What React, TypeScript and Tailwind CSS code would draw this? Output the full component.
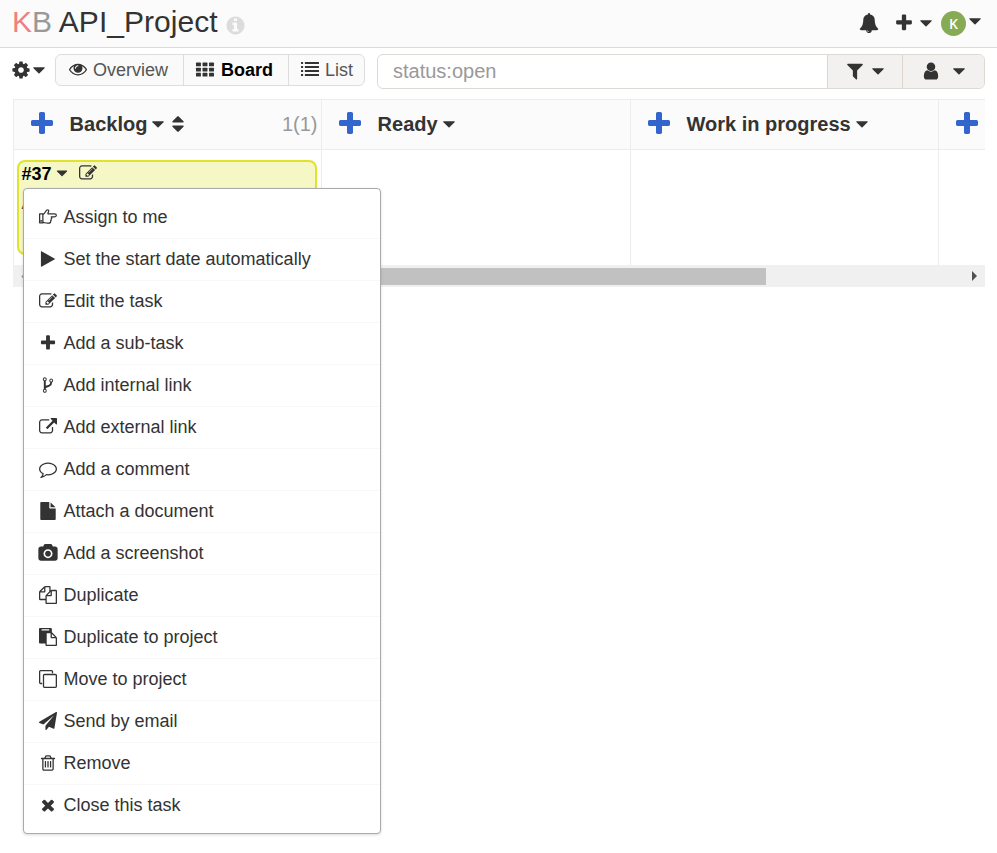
import type { ReactNode } from "react";

const GLYPHS: Record<string, string> = {
  bell: "M912 1696q0-16-16-16-59 0-101.5-42.5t-42.5-101.5q0-16-16-16t-16 16q0 73 51.5 124.5t124.5 51.5q16 0 16-16zm816-288q0 52-38 90t-90 38h-448q0 106-75 181t-181 75-181-75-75-181h-448q-52 0-90-38t-38-90q50-42 91-88t85-119.5 74.5-158.5 50-206 19.5-260q0-152 117-282.5t307-158.5q-8-19-8-39 0-40 28-68t68-28 68 28 28 68q0 20-8 39 190 28 307 158.5t117 282.5q0 139 19.5 260t50 206 74.5 158.5 85 119.5 91 88z",
  plus: "M1600 736v192q0 40-28 68t-68 28h-416v416q0 40-28 68t-68 28h-192q-40 0-68-28t-28-68v-416h-416q-40 0-68-28t-28-68v-192q0-40 28-68t68-28h416v-416q0-40 28-68t68-28h192q40 0 68 28t28 68v416h416q40 0 68 28t28 68z",
  caret: "M1408 704q0 26-19 45l-448 448q-19 19-45 19t-45-19l-448-448q-19-19-19-45t19-45 45-19h896q26 0 45 19t19 45z",
  sort: "M1408 1088q0 26-19 45l-448 448q-19 19-45 19t-45-19l-448-448q-19-19-19-45t19-45 45-19h896q26 0 45 19t19 45zm0-384q0 26-19 45t-45 19h-896q-26 0-45-19t-19-45 19-45l448-448q19-19 45-19t45 19l448 448q19 19 19 45z",
  info: "M1152 1376v-160q0-14-9-23t-23-9h-96v-512q0-14-9-23t-23-9h-320q-14 0-23 9t-9 23v160q0 14 9 23t23 9h96v320h-96q-14 0-23 9t-9 23v160q0 14 9 23t23 9h448q14 0 23-9t9-23zm-128-896v-160q0-14-9-23t-23-9h-192q-14 0-23 9t-9 23v160q0 14 9 23t23 9h192q14 0 23-9t9-23zm640 416q0 209-103 385.5t-279.5 279.5-385.5 103-385.5-103-279.5-279.5-103-385.5 103-385.5 279.5-279.5 385.5-103 385.5 103 279.5 279.5 103 385.5z",
  cog: "M1152 896q0-106-75-181t-181-75-181 75-75 181 75 181 181 75 181-75 75-181zm512-109v222q0 12-8 23t-20 13l-185 28q-19 54-39 91 35 50 107 138 10 12 10 25t-9 23q-27 37-99 108t-94 71q-12 0-26-9l-138-108q-44 23-91 38-16 136-29 186-7 28-36 28h-222q-14 0-24.5-8.5t-11.5-21.5l-28-184q-49-16-90-37l-141 107q-10 9-25 9-14 0-25-11-126-114-165-168-7-10-7-23 0-12 8-23 15-21 51-66.5t54-70.5q-27-50-41-99l-183-27q-13-2-21-12.5t-8-23.5v-222q0-12 8-23t19-13l186-28q14-46 39-92-40-57-107-138-10-12-10-24 0-10 9-23 26-36 98.5-107.5t94.5-71.5q13 0 26 10l138 107q44-23 91-38 16-136 29-186 7-28 36-28h222q14 0 24.5 8.5t11.5 21.5l28 184q49 16 90 37l142-107q9-9 24-9 13 0 25 10 129 119 165 170 7 8 7 22 0 12-8 23-15 21-51 66.5t-54 70.5q26 50 41 98l183 28q13 2 21 12.5t8 23.5z",
  eye: "M1664 960q-152-236-381-353 61 104 61 225 0 185-131.5 316.5t-316.5 131.5-316.5-131.5-131.5-316.5q0-121 61-225-229 117-381 353 133 205 333.5 326.5t434.5 121.5 434.5-121.5 333.5-326.5zm-720-384q0-20-14-34t-34-14q-125 0-214.5 89.5t-89.5 214.5q0 20 14 34t34 14 34-14 14-34q0-86 61-147t147-61q20 0 34-14t14-34zm848 384q0 34-20 69-140 230-376.5 368.5t-499.5 138.5-499.5-139-376.5-368q-20-35-20-69t20-69q140-229 376.5-368t499.5-139 499.5 139 376.5 368q20 35 20 69z",
  filter: "M1595 295q17 41-14 70l-493 493v742q0 42-39 59-13 5-25 5-27 0-45-19l-256-256q-19-19-19-45v-486l-493-493q-31-29-14-70 17-39 59-39h1280q42 0 59 39z",
  user: "M1536 1399q0 109-62.5 187t-150.5 78h-854q-88 0-150.5-78t-62.5-187q0-85 8.5-160.5t31.5-152 58.5-131 94-89 134.5-34.5q131 128 313 128t313-128q76 0 134.5 34.5t94 89 58.5 131 31.5 152 8.5 160.5zm-256-887q0 159-112.5 271.5t-271.5 112.5-271.5-112.5-112.5-271.5 112.5-271.5 271.5-112.5 271.5 112.5 112.5 271.5z",
  edit: "M888 1184l116-116-152-152-116 116v56h96v96h56zm440-720q-16-16-33 1l-350 350q-17 17-1 33t33-1l350-350q17-17 1-33zm80 594v190q0 119-84.5 203.5t-203.5 84.5h-832q-119 0-203.5-84.5t-84.5-203.5v-832q0-119 84.5-203.5t203.5-84.5h832q63 0 117 25 15 7 18 23 3 17-9 29l-49 49q-14 14-32 8-23-6-45-6h-832q-66 0-113 47t-47 113v832q0 66 47 113t113 47h832q66 0 113-47t47-113v-126q0-13 9-22l64-64q15-15 35-7t20 29zm-96-738l288 288-672 672h-288v-288zm444 132l-92 92-288-288 92-92q28-28 68-28t68 28l152 152q28 28 28 68t-28 68z",
  play: "M1576 927l-1328 738q-23 13-39.5 3t-16.5-36v-1472q0-26 16.5-36t39.5 3l1328 738q23 13 23 31t-23 31z",
  fork: "M672 1472q0-40-28-68t-68-28-68 28-28 68 28 68 68 28 68-28 28-68zm0-1152q0-40-28-68t-68-28-68 28-28 68 28 68 68 28 68-28 28-68zm640 128q0-40-28-68t-68-28-68 28-28 68 28 68 68 28 68-28 28-68zm96 0q0 52-26 96.5t-70 69.5q-2 287-226 414-67 38-203 81-128 40-169.5 71t-41.5 100v26q44 25 70 69.5t26 96.5q0 80-56 136t-136 56-136-56-56-136q0-52 26-96.5t70-69.5v-820q-44-25-70-69.5t-26-96.5q0-80 56-136t136-56 136 56 56 136q0 52-26 96.5t-70 69.5v497q54-26 154-57 55-17 87.5-29.5t70.5-31 59-39.5 40.5-51 28-69.5 8.5-91.5q-44-25-70-69.5t-26-96.5q0-80 56-136t136-56 136 56 56 136z",
  external: "M1408 928v320q0 119-84.5 203.5t-203.5 84.5h-832q-119 0-203.5-84.5t-84.5-203.5v-832q0-119 84.5-203.5t203.5-84.5h704q14 0 23 9t9 23v64q0 14-9 23t-23 9h-704q-66 0-113 47t-47 113v832q0 66 47 113t113 47h832q66 0 113-47t47-113v-320q0-14 9-23t23-9h64q14 0 23 9t9 23zm384-864v512q0 26-19 45t-45 19-45-19l-176-176-652 652q-10 10-23 10t-23-10l-114-114q-10-10-10-23t10-23l652-652-176-176q-19-19-19-45t19-45 45-19h512q26 0 45 19t19 45z",
  comment: "M896 384q-204 0-381.5 69.5t-282 187.5-104.5 255q0 112 71.5 213.5t201.5 175.5l87 50-27 96q-24 91-70 172 152-63 275-171l43-38 57 6q69 8 130 8 204 0 381.5-69.5t282-187.5 104.5-255-104.5-255-282-187.5-381.5-69.5zm896 512q0 174-120 321.5t-326 233-450 85.5q-70 0-145-8-198 175-460 242-49 14-114 22h-5q-15 0-27-10.5t-16-27.5v-1q-3-4-.5-12t2-10 4.5-9.5l6-9 7-8.5 8-9q7-8 31-34.5t34.5-38 31-39.5 32.5-51 27-59 26-76q-157-89-247.5-220t-90.5-281q0-174 120-321.5t326-233 450-85.5 450 85.5 326 233 120 321.5z",
  file: "M1152 512v-472q22 14 36 28l408 408q14 14 28 36h-472zm-128 32q0 40 28 68t68 28h544v1056q0 40-28 68t-68 28h-1344q-40 0-68-28t-28-68v-1600q0-40 28-68t68-28h800v544z",
  camera: "M896 672q119 0 203.5 84.5t84.5 203.5-84.5 203.5-203.5 84.5-203.5-84.5-84.5-203.5 84.5-203.5 203.5-84.5zm704-416q106 0 181 75t75 181v896q0 106-75 181t-181 75h-1408q-106 0-181-75t-75-181v-896q0-106 75-181t181-75h224l51-136q19-49 69.5-84.5t103.5-35.5h512q53 0 103.5 35.5t69.5 84.5l51 136h224zm-704 1152q185 0 316.5-131.5t131.5-316.5-131.5-316.5-316.5-131.5-316.5 131.5-131.5 316.5 131.5 316.5 316.5 131.5z",
  files: "M1696 384q40 0 68 28t28 68v1216q0 40-28 68t-68 28h-960q-40 0-68-28t-28-68v-288h-544q-40 0-68-28t-28-68v-672q0-40 20-88t48-76l408-408q28-28 76-48t88-20h416q40 0 68 28t28 68v328q68-40 128-40h416zm-544 213l-299 299h299v-299zm-640-384l-299 299h299v-299zm196 647l316-316v-416h-384v416q0 40-28 68t-68 28h-416v640h512v-256q0-40 20-88t48-76zm956 804v-1152h-384v416q0 40-28 68t-68 28h-416v640h896z",
  clipboard: "M768 1664h896v-640h-416q-40 0-68-28t-28-68v-416h-384v1152zm256-1440v-64q0-13-9.5-22.5t-22.5-9.5h-704q-13 0-22.5 9.5t-9.5 22.5v64q0 13 9.5 22.5t22.5 9.5h704q13 0 22.5-9.5t9.5-22.5zm256 672h299l-299-299v299zm512 128v672q0 40-28 68t-68 28h-960q-40 0-68-28t-28-68v-160h-544q-40 0-68-28t-28-68v-1344q0-40 28-68t68-28h1088q40 0 68 28t28 68v328q21 13 36 28l408 408q28 28 48 76t20 88z",
  clone: "M1664 1632v-1088q0-13-9.5-22.5t-22.5-9.5h-1088q-13 0-22.5 9.5t-9.5 22.5v1088q0 13 9.5 22.5t22.5 9.5h1088q13 0 22.5-9.5t9.5-22.5zm128-1088v1088q0 66-47 113t-113 47h-1088q-66 0-113-47t-47-113v-1088q0-66 47-113t113-47h1088q66 0 113 47t47 113zm-384-384v160h-128v-160q0-13-9.5-22.5t-22.5-9.5h-1088q-13 0-22.5 9.5t-9.5 22.5v1088q0 13 9.5 22.5t22.5 9.5h160v128h-160q-66 0-113-47t-47-113v-1088q0-66 47-113t113-47h1088q66 0 113 47t47 113z",
  plane: "M1764 11q33 24 27 64l-256 1536q-5 29-32 45-14 8-31 8-11 0-24-5l-453-185-242 295q-18 23-49 23-13 0-22-4-19-7-30.5-23.5t-11.5-36.5v-349l864-1059-1069 925-395-162q-37-14-40-55-2-40 32-59l1664-960q15-9 32-9 20 0 36 11z",
  trash: "M704 736v576q0 14-9 23t-23 9h-64q-14 0-23-9t-9-23v-576q0-14 9-23t23-9h64q14 0 23 9t9 23zm256 0v576q0 14-9 23t-23 9h-64q-14 0-23-9t-9-23v-576q0-14 9-23t23-9h64q14 0 23 9t9 23zm256 0v576q0 14-9 23t-23 9h-64q-14 0-23-9t-9-23v-576q0-14 9-23t23-9h64q14 0 23 9t9 23zm128 724v-948h-896v948q0 22 7 40.5t14.5 27 10.5 8.5h832q3 0 10.5-8.5t14.5-27 7-40.5zm-672-1076h448l-48-117q-7-9-17-11h-317q-10 2-17 11zm928 32v64q0 14-9 23t-23 9h-96v948q0 83-47 143.5t-113 60.5h-832q-66 0-113-58.5t-47-141.5v-952h-96q-14 0-23-9t-9-23v-64q0-14 9-23t23-9h309l70-167q15-37 54-63t79-26h320q40 0 79 26t54 63l70 167h309q14 0 23 9t9 23z",
  times: "M1490 1322q0 40-28 68l-136 136q-28 28-68 28t-68-28l-294-294-294 294q-28 28-68 28t-68-28l-136-136q-28-28-28-68t28-68l294-294-294-294q-28-28-28-68t28-68l136-136q28-28 68-28t68 28l294 294 294-294q28-28 68-28t68 28l136 136q28 28 28 68t-28 68l-294 294 294 294q28 28 28 68z",
};

function Svg({ className = "", children }: { className?: string; children: ReactNode }) {
  return (
    <svg viewBox="0 0 1792 1792" fill="currentColor" className={`shrink-0 overflow-visible ${className}`}>
      {children}
    </svg>
  );
}

function Icon({ name, className = "size-[18px]" }: { name: string; className?: string }) {
  if (name === "hand") {
    return (
      <Svg className={className}>
        <g fill="none" stroke="currentColor" strokeWidth="125" strokeLinejoin="round">
          <path d="M64 580h320v900H64z" />
          <path d="M384 640c110-20 230-190 310-340 60-110 90-130 150-120 110 10 150 90 110 180-30 80-70 110-70 220h660c110 0 184 70 184 150s-74 150-184 150h-320c60 80 50 170-20 230 30 60 20 130-40 170 20 130-60 230-180 230H850c-180 0-300-60-466-80" />
        </g>
        <circle cx="210" cy="1290" r="90" />
      </Svg>
    );
  }
  if (name === "grid") {
    return (
      <Svg className={className}>
        {[256, 768, 1280].map((y) =>
          [0, 650, 1300].map((x) => <rect key={`${x}-${y}`} x={x} y={y} width="490" height="375" rx="60" />)
        )}
      </Svg>
    );
  }
  if (name === "list") {
    return (
      <Svg className={className}>
        {[200, 600, 1000, 1400].map((y) => (
          <g key={y}>
            <rect x="0" y={y} width="210" height="190" rx="30" />
            <rect x="384" y={y} width="1408" height="190" rx="30" />
          </g>
        ))}
      </Svg>
    );
  }
  return (
    <Svg className={className}>
      <path d={GLYPHS[name]} />
    </Svg>
  );
}

const MENU = [
  ["hand", "Assign to me"],
  ["play", "Set the start date automatically"],
  ["edit", "Edit the task"],
  ["plus", "Add a sub-task"],
  ["fork", "Add internal link"],
  ["external", "Add external link"],
  ["comment", "Add a comment"],
  ["file", "Attach a document"],
  ["camera", "Add a screenshot"],
  ["files", "Duplicate"],
  ["clipboard", "Duplicate to project"],
  ["clone", "Move to project"],
  ["plane", "Send by email"],
  ["trash", "Remove"],
  ["times", "Close this task"],
];

function Header() {
  return (
    <header className="flex h-12 items-start border-b border-[#dbdbdb] bg-[#fbfbfb] pl-3">
      <h1 className="flex items-start text-[30px] leading-[34px] whitespace-pre text-[#333]">
        <span className="pt-[5px]">
          <span className="text-[#f08080]">K</span>
          <span className="text-[#999]">B</span>
          <span className="tracking-[0.05px]"> API_Project</span>
        </span>
        <Icon name="info" className="mt-[15px] ml-[7px] size-[21px] text-[#dcdcdc]" />
      </h1>
      <div className="ml-auto flex">
        <Icon name="bell" className="mt-[13px] size-5" />
        <Icon name="plus" className="mt-[13px] ml-[15px] size-5" />
        <Icon name="caret" className="mt-[13px] ml-[2px] size-5" />
        <div className="mt-[11px] ml-[5px] flex size-[25px] items-center justify-center rounded-full bg-[#87ab54] font-['Open_Sans',sans-serif] text-[14px] font-semibold text-white">
          K
        </div>
        <Icon name="caret" className="mt-[11px] mr-[12px] -ml-px size-5" />
      </div>
    </header>
  );
}

function Toolbar() {
  return (
    <div className="flex h-[51px] items-start pt-1.5 pl-[11px]">
      <Icon name="cog" className="mt-1.5 size-5" />
      <Icon name="caret" className="mt-1.5 -ml-0.5 size-5" />
      <nav className="ml-[6px] flex h-8 w-[310px] overflow-hidden rounded-md border border-[#ddd] bg-[#fafafa] text-lg leading-[30px] text-[#555]">
        <div className="flex w-[128px] items-center border-r border-[#ddd] pl-[13px]">
          <Icon name="eye" className="mb-0.5 size-[18px] text-[#333]" />
          <span className="ml-1.5">Overview</span>
        </div>
        <div className="flex w-[105px] items-center border-r border-[#ddd] pl-3">
          <Icon name="grid" className="mb-[3px] size-[18px] text-[#333]" />
          <span className="ml-[7px] font-bold text-black">Board</span>
        </div>
        <div className="flex items-center pl-3">
          <Icon name="list" className="mb-0.5 size-[18px] text-[#333]" />
          <span className="ml-[6px]">List</span>
        </div>
      </nav>
      <div className="ml-3 flex h-[35px] w-[608px] overflow-hidden rounded-md border border-[#ddd9d4]">
        <div className="w-[449px] pl-[15px] text-xl leading-[33px] text-[#999]">status:open</div>
        <div className="flex w-[76px] border-x border-[#ddd6ce] bg-[#f2f1f0] pt-1.5 pl-[17px]">
          <Icon name="filter" className="size-5" />
          <Icon name="caret" className="ml-[3px] size-5" />
        </div>
        <div className="flex flex-1 bg-[#f2f1f0] pt-1.5 pl-[18px]">
          <Icon name="user" className="size-5" />
          <Icon name="caret" className="ml-[8px] size-5" />
        </div>
      </div>
    </div>
  );
}

function Column({ title, count, width, children }: { title?: string; count?: string; width: string; children?: ReactNode }) {
  return (
    <section className={`flex shrink-0 flex-col border-l border-[#ececec] ${width}`}>
      <div className="flex h-[51px] border-y border-[#ececec] bg-[#fbfbfb] pl-[13.6px] text-xl leading-[48px] font-bold">
        <Icon name="plus" className="mt-[10px] size-7 text-[#36c]" />
        {title && (
          <>
            <span className="ml-[14px]">{title}</span>
            <Icon name="caret" className="mt-[14px] ml-px size-5" />
          </>
        )}
        {count && (
          <>
            <Icon name="sort" className="mt-[14px] size-5" />
            <span className="mr-[3.5px] ml-auto font-normal text-[#999]">{count}</span>
          </>
        )}
      </div>
      <div className="flex-1 pt-[10px] pl-[3px]">{children}</div>
    </section>
  );
}

function TaskMenu() {
  return (
    <div className="absolute top-[188px] left-[23px] h-[646px] w-[358px] rounded border border-[#aaa] bg-white pt-2 shadow-[0_1px_3px_rgba(0,0,0,0.15)]">
      {MENU.map(([icon, label], i) => (
        <div
          key={label}
          className={`flex h-[42px] items-start pl-[15px] text-lg leading-[40px] ${i < MENU.length - 1 ? "border-b border-[#f8f8f8]" : ""}`}
        >
          <Icon name={icon} className="mt-[10.5px] size-[18px]" />
          <span className="ml-[6.5px]">{label}</span>
        </div>
      ))}
    </div>
  );
}

export default function App() {
  return (
    <div className="relative h-[853px] w-[997px] overflow-hidden bg-white font-['Liberation_Sans',Arial,sans-serif] text-[#333]">
      <Header />
      <Toolbar />
      <main className="ml-[13px] w-[972px]">
        <div className="flex h-[166px] overflow-hidden">
          <Column title="Backlog" count="1(1)" width="w-[308px]">
            <div className="h-[95px] w-[300px] rounded-lg border-2 border-[#dfe32d] bg-[#f5f7c4] pl-[2.5px]">
              <div className="flex pt-px text-lg leading-[23px] font-bold text-black">
                #37
                <Icon name="caret" className="mt-px ml-px size-[18px] text-[#333]" />
                <Icon name="edit" className="mt-px ml-[8px] size-[18px] text-[#333]" />
              </div>
              <div className="text-lg leading-[34px] text-[#8a4a10]">A</div>
            </div>
          </Column>
          <Column title="Ready" width="w-[309px]" />
          <Column title="Work in progress" width="w-[308px]" />
          <Column width="w-[308px]" />
        </div>
        <div className="flex h-[22px] items-center bg-[#f0f0f0]">
          <svg viewBox="0 0 5 10" className="ml-2 h-[9px] w-[5px] fill-[#999]">
            <path d="M5 0v10L0 5z" />
          </svg>
          <div className="ml-2 h-[17px] w-[732px] bg-[#c1c1c1]" />
          <svg viewBox="0 0 5 10" className="mr-2 ml-auto h-[10px] w-[5px] fill-[#505050]">
            <path d="M0 0v10l5-5z" />
          </svg>
        </div>
      </main>
      <TaskMenu />
    </div>
  );
}
